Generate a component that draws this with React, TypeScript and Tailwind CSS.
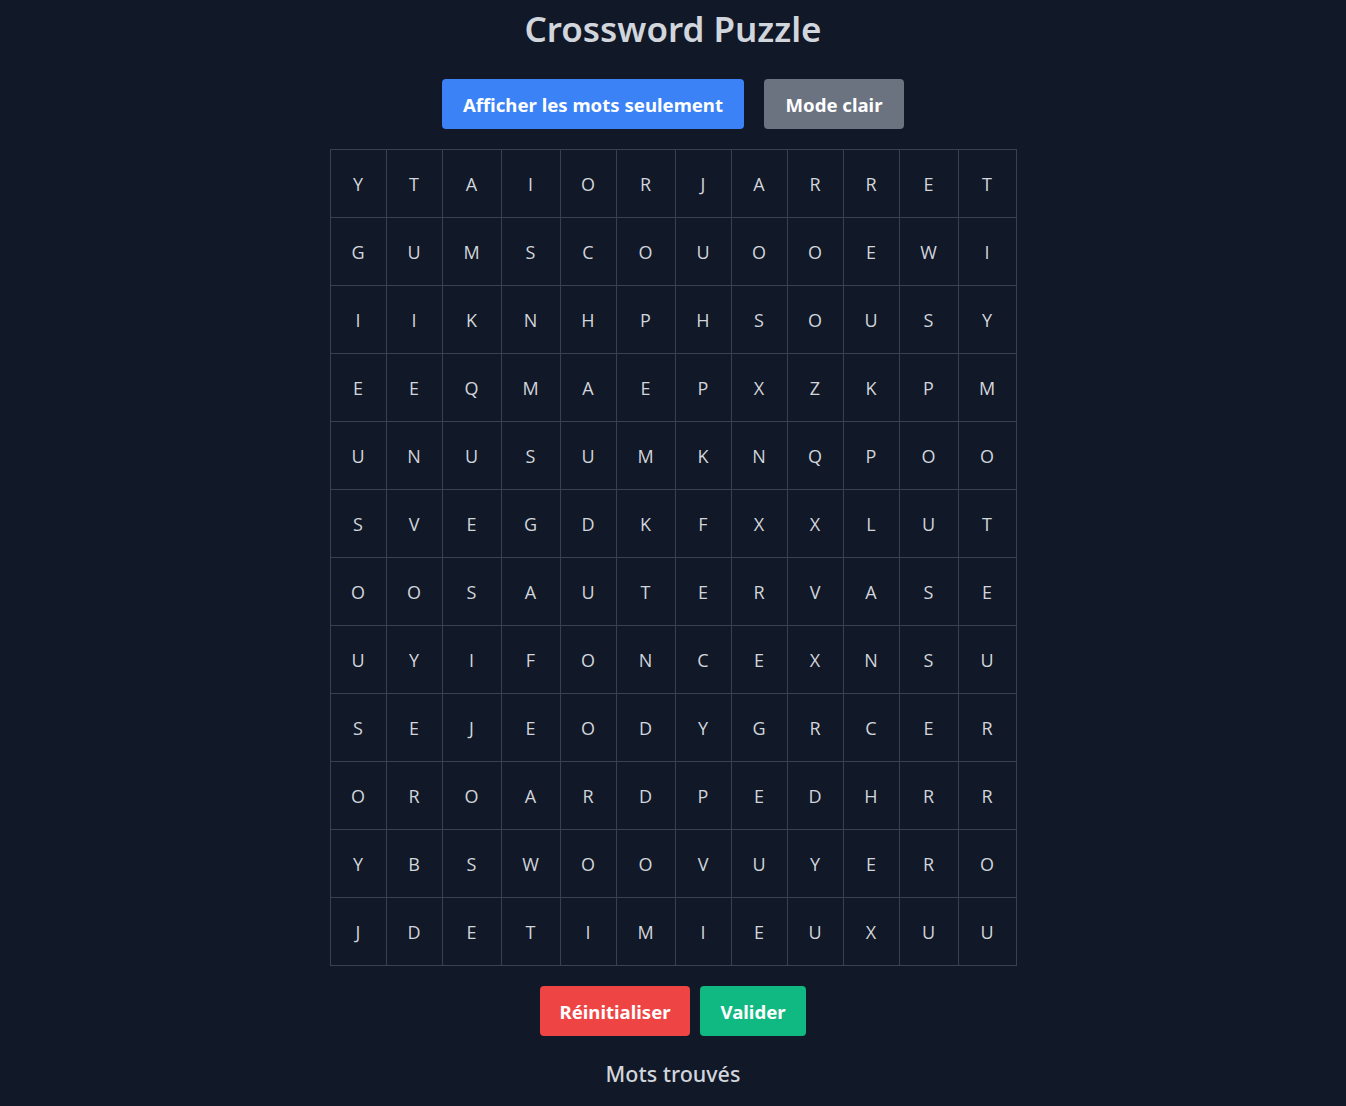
const grid = [
  "YTAIORJARRET",
  "GUMSCOUOOEWI",
  "IIKNHPHSOUSY",
  "EEQMAEPXZKPM",
  "UNUSUMKNQPOO",
  "SVEGDKFXXLUT",
  "OOSAUTERVASE",
  "UYIFONCEXNSU",
  "SEJEODYGRCER",
  "OROARDPEDHRR",
  "YBSWOOVUYERO",
  "JDETIMIEUXUU",
];

// column widths read off the screenshot
const colWidths = [
  "w-[56px]",
  "w-[56px]",
  "w-[59px]",
  "w-[59px]",
  "w-[56px]",
  "w-[59px]",
  "w-[56px]",
  "w-[56px]",
  "w-[56px]",
  "w-[56px]",
  "w-[59px]",
  "w-[58px]",
];

const App = () => {
  return (
    <div className="min-h-screen bg-[#111827] text-gray-300 font-['Noto_Sans',_'Open_Sans',_sans-serif] flex flex-col items-center pt-[5px]">
      <h1 className="text-[35px] font-semibold leading-[48px] mb-[26px]">Crossword Puzzle</h1>
      <div className="flex gap-5 mb-5">
        <button className="bg-[#3b82f6] text-white font-bold text-[18.6px] h-[50px] w-[302px] rounded pt-px">
          Afficher les mots seulement
        </button>
        <button className="bg-[#6b7280] text-white font-bold text-[18.6px] h-[50px] w-[140px] rounded pt-px">
          Mode clair
        </button>
      </div>
      <table className="border-collapse table-fixed">
        <tbody>
          {grid.map((row, r) => (
            <tr key={r}>
              {row.split("").map((ch, c) => (
                <td
                  key={c}
                  className={`border border-[#374151] ${colWidths[c]} h-[68px] p-0 text-center text-lg font-['Open_Sans',_sans-serif]`}
                >
                  {ch}
                </td>
              ))}
            </tr>
          ))}
        </tbody>
      </table>
      <div className="flex gap-2.5 mt-5">
        <button className="bg-[#ef4444] text-white font-bold text-[18.6px] h-[50px] w-[150px] rounded pt-px">
          Réinitialiser
        </button>
        <button className="bg-[#10b981] text-white font-bold text-[18.6px] h-[50px] w-[106px] rounded pt-px">
          Valider
        </button>
      </div>
      <h2 className="text-[21.5px] font-medium mt-6 leading-7">Mots trouvés</h2>
    </div>
  );
};

export default App;
